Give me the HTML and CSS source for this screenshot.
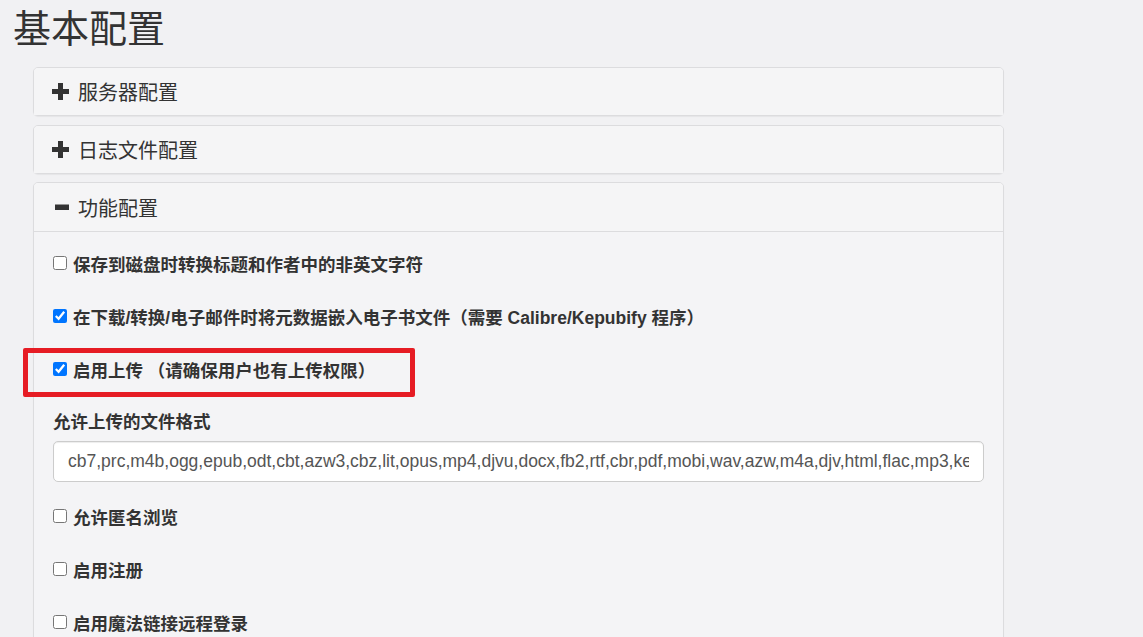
FILE: index.html
```html
<!DOCTYPE html>
<html lang="zh-CN">
  <head>
    <meta charset="UTF-8" />
    <meta name="viewport" content="width=device-width, initial-scale=1.0" />
    <title>基本配置</title>
    <link rel="stylesheet" href="styles.css">
  </head>
  <body>
    <div class="page">
      <h1>基本配置</h1>
      <div class="panel-group">
        <!-- Server settings (collapsed) -->
        <div class="panel">
          <div class="panel-heading">
            <span class="toggle">
              <svg width="17" height="17" viewBox="0 0 17 17"><path d="M6 0h5v6h6v5h-6v6h-5v-6h-6v-5h6z" fill="#333"/></svg>
            </span>
            服务器配置
          </div>
        </div>
        <!-- Logfile settings (collapsed) -->
        <div class="panel">
          <div class="panel-heading">
            <span class="toggle">
              <svg width="17" height="17" viewBox="0 0 17 17"><path d="M6 0h5v6h6v5h-6v6h-5v-6h-6v-5h6z" fill="#333"/></svg>
            </span>
            日志文件配置
          </div>
        </div>
        <!-- Feature settings (expanded) -->
        <div class="panel">
          <div class="panel-heading open">
            <span class="toggle">
              <svg width="17" height="17" viewBox="0 0 17 17"><path d="M3 5.5h14v5.5h-14z" fill="#333"/></svg>
            </span>
            功能配置
          </div>
          <div class="panel-body">
            <label class="check">
              <input type="checkbox">
              <span>保存到磁盘时转换标题和作者中的非英文字符</span>
            </label>
            <label class="check">
              <input type="checkbox" checked>
              <span>在下载/转换/电子邮件时将元数据嵌入电子书文件（需要 Calibre/Kepubify 程序）</span>
            </label>
            <label class="check">
              <input type="checkbox" checked>
              <span>启用上传 （请确保用户也有上传权限）</span>
            </label>
            <div class="form-group">
              <label class="field-label" for="upload-formats">允许上传的文件格式</label>
              <input id="upload-formats" class="form-control" type="text" value="cb7,prc,m4b,ogg,epub,odt,cbt,azw3,cbz,lit,opus,mp4,djvu,docx,fb2,rtf,cbr,pdf,mobi,wav,azw,m4a,djv,html,flac,mp3,kepub,txt,rar,zip">
            </div>
            <label class="check">
              <input type="checkbox">
              <span>允许匿名浏览</span>
            </label>
            <label class="check">
              <input type="checkbox">
              <span>启用注册</span>
            </label>
            <label class="check">
              <input type="checkbox">
              <span>启用魔法链接远程登录</span>
            </label>
          </div>
        </div>
      </div>

      <!-- Annotation box drawn over the upload option -->
      <div class="highlight"></div>
    </div>
  </body>
</html>
```

FILE: styles.css
```css
* {
  margin: 0;
  padding: 0;
  box-sizing: border-box;
}

body {
  font-family: "Liberation Sans", "Noto Sans CJK SC", Arial, sans-serif;
  font-size: 17.5px;
  color: #333;
  background-color: #f1f1f3;
  overflow: hidden;
}

.page {
  position: relative;
  padding: 9px 0 0 13px;
}

h1 {
  font-weight: normal;
  font-size: 38px;
  line-height: 41px;
  margin-bottom: 17px;
}

/* Collapsible panels */
.panel-group {
  margin-left: 20px;
  width: 971px;
}

.panel {
  background-color: #f4f4f6;
  border: 1px solid #dcdcde;
  border-radius: 5px;
  box-shadow: 0 1px 1px rgba(0, 0, 0, 0.05);
}

.panel + .panel {
  margin-top: 8.5px;
}

.panel-heading {
  display: flex;
  align-items: center;
  padding: 12px 18px;
  height: 47px;
  font-size: 20px;
  background-color: #f5f5f6;
  border-radius: 4px 4px 0 0;
}

.panel-heading.open {
  border-bottom: 1px solid #dcdcde;
  height: 49px;
  padding-top: 13px;
}

.toggle {
  display: inline-flex;
  align-items: center;
  width: 26px;
  height: 20px;
}

.panel-body {
  padding: 16px 19px 0;
}

/* Checkbox rows */
.check {
  display: flex;
  align-items: center;
  height: 30px;
  margin-bottom: 23px;
  font-weight: bold;
}

.check input {
  width: 14px;
  height: 14px;
  margin: 0 6px 0 0;
}

.form-group {
  margin-bottom: 19px;
}

.field-label {
  display: block;
  height: 30px;
  line-height: 30px;
  font-weight: bold;
}

.form-control {
  display: block;
  width: 100%;
  height: 41px;
  margin-top: 4px;
  padding: 0 14px;
  font-family: inherit;
  font-size: 17.5px;
  color: #555;
  background-color: #fff;
  border: 1px solid #ccc;
  border-radius: 5px;
  box-shadow: inset 0 1px 1px rgba(0, 0, 0, 0.075);
}

/* Red annotation rectangle */
.highlight {
  position: absolute;
  left: 23px;
  top: 348px;
  width: 392px;
  height: 49px;
  border: 5px solid #e61c24;
  border-radius: 2px;
}
```
